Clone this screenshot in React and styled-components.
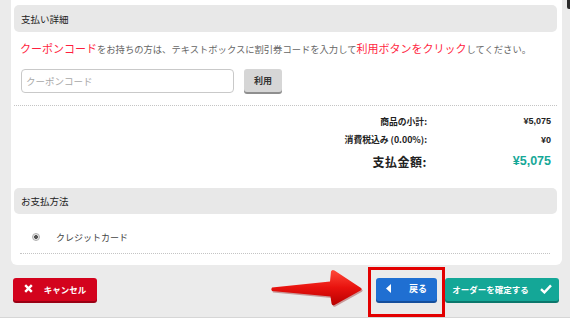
import React from "react";
import styled, { createGlobalStyle } from "styled-components";

const GlobalStyle = createGlobalStyle`
    * { box-sizing: border-box; }
    body {
        margin: 0;
        background: #ffffff;
        font-family: "Noto Sans CJK JP", "Noto Sans", sans-serif;
        color: #333;
    }
`;

const summary = [
    { label: "商品の小計:", value: "¥5,075" },
    { label: "消費税込み (0.00%):", value: "¥0" },
];

const App = () => {
    return (
        <Screen>
            <GlobalStyle />
            <Stage>
                <Main>
                    <Card>
                        <SectionHead>支払い詳細</SectionHead>
                        <Notice>
                            <Em>クーポンコード</Em>をお持ちの方は、テキストボックスに割引券コードを入力して
                            <Em>利用ボタンをクリック</Em>してください。
                        </Notice>
                        <CouponRow>
                            <CouponInput placeholder="クーポンコード" />
                            <UseButton>利用</UseButton>
                        </CouponRow>
                        <Divider />
                        <Summary>
                            {summary.map((row) => (
                                <React.Fragment key={row.label}>
                                    <SumLabel>{row.label}</SumLabel>
                                    <SumValue>{row.value}</SumValue>
                                </React.Fragment>
                            ))}
                            <SumLabel total>支払金額:</SumLabel>
                            <SumValue total>¥5,075</SumValue>
                        </Summary>
                        <SectionHead second>お支払方法</SectionHead>
                        <MethodRow>
                            <Radio />
                            <span>クレジットカード</span>
                        </MethodRow>
                        <Divider inset />
                    </Card>
                    <Footer>
                        <ActionButton color="#d3031d" shade="#9a0014" width={84}>
                            <svg width="9" height="9" viewBox="0 0 9 9">
                                <path d="M1.2 1.2 L7.8 7.8 M7.8 1.2 L1.2 7.8" stroke="#fff" strokeWidth="2.4" />
                            </svg>
                            キャンセル
                        </ActionButton>
                        <RightGroup>
                            <ActionButton color="#1f6fd2" shade="#154f9c" width={61}>
                                <svg width="6" height="9" viewBox="0 0 6 9">
                                    <polygon points="5,0 5,9 0,4.5" fill="#fff" />
                                </svg>
                                <BackText>戻る</BackText>
                            </ActionButton>
                            <ActionButton color="#14a797" shade="#0c776c" width={114}>
                                オーダーを確定する
                                <svg width="12" height="10" viewBox="0 0 12 10">
                                    <path d="M1 5.2 L4.4 8.4 L11 1.4" stroke="#fff" strokeWidth="2.4" fill="none" />
                                </svg>
                            </ActionButton>
                        </RightGroup>
                    </Footer>
                </Main>
                <Gutter>
                    <Mark />
                </Gutter>
                <Arrow width="98" height="44" viewBox="0 0 98 44">
                    <defs>
                        <linearGradient id="arrowFill" x1="0" y1="0" x2="0" y2="1">
                            <stop offset="0" stopColor="#ff4a3a" />
                            <stop offset="0.5" stopColor="#e8120e" />
                            <stop offset="1" stopColor="#b80000" />
                        </linearGradient>
                    </defs>
                    <path
                        d="M4 22.5 L62 16.5 L63 6.5 Q64 4 66.5 5.5 L93 23 Q94.5 24 93 25.2 L66.5 40 Q64 41 63.5 38.5 L62.5 31.5 L4 26 Q2.5 24.2 4 22.5 Z"
                        fill="#8a0000"
                        opacity="0.35"
                        transform="translate(1 1.5)"
                    />
                    <path
                        d="M4 22.5 L62 16.5 L63 6.5 Q64 4 66.5 5.5 L93 23 Q94.5 24 93 25.2 L66.5 40 Q64 41 63.5 38.5 L62.5 31.5 L4 26 Q2.5 24.2 4 22.5 Z"
                        fill="url(#arrowFill)"
                    />
                </Arrow>
                <Highlight />
            </Stage>
            <BottomStrip />
        </Screen>
    );
};

export default App;

const Screen = styled.div`
    width: 570px;
    height: 328px;
    overflow: hidden;
    display: flex;
    flex-direction: column;
`;

const Stage = styled.div`
    position: relative;
    height: 317px;
    background: #ebebeb;
    display: flex;
`;

const Main = styled.div`
    width: 562px;
    padding-left: 11px;
`;

const Card = styled.div`
    background: #ffffff;
    padding: 5px 5px 11px 3px;
    border-radius: 0 0 6px 6px;
    height: 265px;
`;

const SectionHead = styled.div`
    height: ${({ second }) => (second ? 26 : 27)}px;
    margin-top: ${({ second }) => (second ? 15 : 0)}px;
    background: #e8e8e8;
    border-radius: 5px;
    display: flex;
    align-items: center;
    padding-left: 7px;
    font-size: 9.5px;
    color: #222;
`;

const Notice = styled.p`
    margin: 8px 0 0 6px;
    height: 16px;
    line-height: 16px;
    font-size: 9.3px;
    color: #666;
    white-space: nowrap;
`;

const Em = styled.span`
    font-size: 11px;
    color: #ff1f3f;
`;

const CouponRow = styled.div`
    display: flex;
    align-items: flex-start;
    gap: 10px;
    margin: 13px 0 0 7px;
    height: 25px;
`;

const CouponInput = styled.input`
    width: 213px;
    height: 24px;
    border: 1px solid #c9c9c9;
    border-radius: 4px;
    padding: 0 4px;
    font-family: inherit;
    font-size: 9.5px;
    outline: none;
    &::placeholder {
        color: #a8a8a8;
    }
`;

const UseButton = styled.button`
    width: 38px;
    height: 23px;
    border: none;
    border-radius: 3px;
    background: #d6d6d6;
    box-shadow: 0 2px 0 #8f8f8f;
    font-family: inherit;
    font-size: 9px;
    font-weight: 700;
    color: #333;
    padding: 0;
`;

const Divider = styled.div`
    margin: ${({ inset }) => (inset ? "5px 7px 0 6px" : "11px 0 0 0")};
    border-top: 1px dotted #c4c4c4;
`;

const Summary = styled.div`
    display: grid;
    grid-template-columns: 1fr 124px;
    grid-auto-rows: 18px 19px 24px;
    margin: 6px 6px 0 0;
    align-items: center;
    color: #222;
`;

const SumLabel = styled.div`
    text-align: right;
    font-weight: 700;
    font-size: ${({ total }) => (total ? 12 : 8.8)}px;
    letter-spacing: ${({ total }) => (total ? "0.5px" : "0")};
`;

const SumValue = styled.div`
    text-align: right;
    font-family: "Liberation Sans", Arial, sans-serif;
    font-weight: 700;
    font-size: ${({ total }) => (total ? 12.5 : 9)}px;
    color: ${({ total }) => (total ? "#16a898" : "#222")};
`;

const MethodRow = styled.div`
    display: flex;
    align-items: center;
    gap: 16px;
    height: 22px;
    margin: 12px 0 0 18px;
    font-size: 9px;
    color: #444;
`;

const Radio = styled.span`
    width: 8px;
    height: 8px;
    border-radius: 50%;
    border: 1px solid #b0b0b0;
    background: radial-gradient(circle, #555 0 1.6px, #e6e6e6 2.2px);
`;

const Footer = styled.div`
    display: flex;
    justify-content: space-between;
    align-items: flex-start;
    margin-top: 13px;
    padding: 0 3px 0 2px;
`;

const RightGroup = styled.div`
    display: flex;
    gap: 8px;
`;

const ActionButton = styled.button`
    width: ${({ width }) => width}px;
    height: 23px;
    border: none;
    border-radius: 3px;
    background: ${({ color }) => color};
    box-shadow: 0 2px 0 ${({ shade }) => shade};
    color: #ffffff;
    font-family: inherit;
    font-weight: 700;
    font-size: 8.5px;
    display: flex;
    align-items: center;
    justify-content: center;
    gap: 11px;
    padding: 0 0 2px;
`;

const BackText = styled.span`
    margin-left: 6px;
    font-size: 9px;
`;

const Gutter = styled.div`
    flex: 1;
`;

const Mark = styled.div`
    width: 3px;
    height: 9px;
    margin-left: 5px;
    background: #2b2b2b;
    border-radius: 0 0 0 2px;
`;

const Arrow = styled.svg`
    position: absolute;
    left: 268px;
    top: 265px;
`;

const Highlight = styled.div`
    position: absolute;
    left: 368px;
    top: 267px;
    width: 77px;
    height: 50px;
    border: 3px solid #e30000;
`;

const BottomStrip = styled.div`
    flex: 1;
    background: #ffffff;
    border-top: 1px solid #d6d6d6;
`;
